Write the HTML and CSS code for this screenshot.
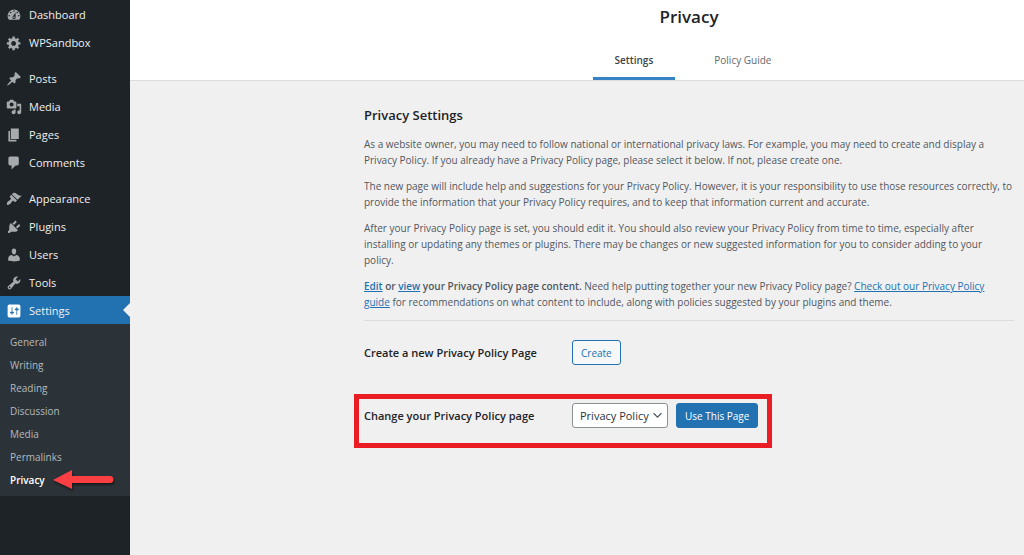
FILE: index.html
```html
<!DOCTYPE html>
<html lang="en">
  <head>
    <meta charset="utf-8">
    <title>Privacy</title>
    <meta name="viewport" content="width=device-width, initial-scale=1">
    <link rel="stylesheet" href="styles.css">
  </head>
  <body>
    <nav class="sidebar">
      <ul class="menu">
        <li><a href="#"><svg viewBox="0 0 20 20"><path d="M3.76 16h12.48c1.09-1.27 1.76-2.92 1.76-4.73C18 7.21 14.42 3 10 3s-8 4.21-8 8.27c0 1.81.67 3.46 1.76 4.73zM10 4c.55 0 1 .45 1 1s-.45 1-1 1-1-.45-1-1 .45-1 1-1zM6 6c.55 0 1 .45 1 1s-.45 1-1 1-1-.45-1-1 .45-1 1-1zm8 0c.55 0 1 .45 1 1s-.45 1-1 1-1-.45-1-1 .45-1 1-1zm-5.37 5.55L12 7v6c0 1.1-.9 2-2 2s-2-.9-2-2c0-.57.24-1.08.63-1.45zM4 10c.55 0 1 .45 1 1s-.45 1-1 1-1-.45-1-1 .45-1 1-1zm12 0c.55 0 1 .45 1 1s-.45 1-1 1-1-.45-1-1 .45-1 1-1zm-5 3c0-.55-.45-1-1-1s-1 .45-1 1 .45 1 1 1 1-.45 1-1z"/></svg>Dashboard</a></li>
        <li><a href="#"><svg viewBox="0 0 20 20"><path d="M18 12h-2.18c-.17.7-.44 1.35-.81 1.93l1.54 1.54-2.1 2.1-1.54-1.54c-.58.36-1.23.63-1.91.79V19H8v-2.18c-.68-.16-1.33-.43-1.91-.79l-1.54 1.54-2.12-2.12 1.54-1.54c-.36-.58-.63-1.23-.79-1.91H1V9.03h2.17c.16-.7.44-1.35.8-1.94L2.43 5.55l2.1-2.1 1.54 1.54c.58-.37 1.24-.64 1.93-.81V2h3v2.18c.68.16 1.33.43 1.91.79l1.54-1.54 2.12 2.12-1.54 1.54c.36.59.64 1.24.8 1.94H18V12zm-8.5 1.5c1.66 0 3-1.34 3-3s-1.34-3-3-3-3 1.34-3 3 1.34 3 3 3z"/></svg>WPSandbox</a></li>
        <li class="separator"></li>
        <li><a href="#"><svg viewBox="0 0 20 20"><path d="M10.44 3.02l1.82-1.82 6.36 6.35-1.83 1.82c-1.05-.68-2.48-.57-3.41.36l-.75.75c-.92.93-1.04 2.35-.35 3.41l-1.83 1.82-2.41-2.41-2.8 2.79c-.42.42-3.38 2.71-3.8 2.29s1.86-3.39 2.28-3.81l2.79-2.79L4.1 9.36l1.83-1.82c1.05.69 2.48.57 3.4-.36l.75-.75c.93-.92 1.05-2.35.36-3.41z"/></svg>Posts</a></li>
        <li><a href="#"><svg viewBox="0 0 20 20"><path d="M13 11V4c0-.55-.45-1-1-1h-1.67L9 1H5L3.67 3H2c-.55 0-1 .45-1 1v7c0 .55.45 1 1 1h10c.55 0 1-.45 1-1zM7 4.5c1.38 0 2.5 1.12 2.5 2.5S8.38 9.5 7 9.5 4.5 8.38 4.5 7 5.62 4.5 7 4.5zM14 6h5v10.5c0 1.38-1.12 2.5-2.5 2.5S14 17.88 14 16.5s1.12-2.5 2.5-2.5c.17 0 .34.02.5.05V9h-3V6zm-4 8.05V13h2v3.5c0 1.38-1.12 2.5-2.5 2.5S7 17.88 7 16.5 8.12 14 9.5 14c.17 0 .34.02.5.05z"/></svg>Media</a></li>
        <li><a href="#"><svg viewBox="0 0 20 20"><path d="M6 15V2h10v13H6zm-1 1h8v2H3V5h2v11z"/></svg>Pages</a></li>
        <li><a href="#"><svg viewBox="0 0 20 20"><path d="M5 2h9c1.1 0 2 .9 2 2v7c0 1.1-.9 2-2 2h-2l-5 5v-5H5c-1.1 0-2-.9-2-2V4c0-1.1.9-2 2-2z"/></svg>Comments</a></li>
        <li class="separator"></li>
        <li><a href="#"><svg viewBox="0 0 20 20"><path d="M14.48 11.06L7.41 3.99l1.5-1.5c.5-.56 2.3-.47 3.51.32 1.21.8 1.43 1.28 2.91 2.1 1.18.64 2.45 1.26 4.45.85zm-.71.71L6.7 4.7 4.93 6.47c-.39.39-.39 1.02 0 1.41l1.06 1.06c.39.39.39 1.03 0 1.42-.6.6-1.43 1.11-2.21 1.69-.35.26-.7.53-1.01.84C1.43 14.23.4 16.08 1.4 17.07c.99 1 2.84-.03 4.18-1.36.31-.31.58-.66.85-1.02.57-.78 1.08-1.61 1.69-2.21.39-.39 1.02-.39 1.41 0l1.06 1.06c.39.39 1.02.39 1.41 0z"/></svg>Appearance</a></li>
        <li><a href="#"><svg viewBox="0 0 20 20"><path d="M13.11 4.36L9.87 7.6 8 5.73l3.24-3.24c.35-.34 1.05-.2 1.56.32.52.51.66 1.21.31 1.55zm-8 1.77l.91-1.12 9.01 9.01-1.19.84c-.71.71-2.63 1.16-3.82 1.16H6.14L4.9 17.26c-.59.59-1.54.59-2.12 0-.59-.58-.59-1.53 0-2.12l1.24-1.24v-3.88c0-1.13.4-3.19 1.09-3.89zm7.26 3.97l3.24-3.24c.34-.35 1.04-.21 1.55.31.52.51.66 1.21.31 1.55l-3.24 3.25z"/></svg>Plugins</a></li>
        <li><a href="#"><svg viewBox="0 0 20 20"><path d="M10 9.25c-2.27 0-2.73-3.44-2.73-3.44C7 4.02 7.82 2 9.97 2c2.16 0 2.98 2.02 2.71 3.81 0 0-.41 3.44-2.68 3.44zm0 2.57L12.72 10c2.39 0 4.52 2.33 4.52 4.53v2.49s-3.65 1.13-7.24 1.13c-3.65 0-7.24-1.13-7.24-1.13v-2.49c0-2.25 1.94-4.48 4.47-4.48z"/></svg>Users</a></li>
        <li><a href="#"><svg viewBox="0 0 20 20"><path d="M16.68 9.77c-1.34 1.34-3.3 1.67-4.95.99l-5.41 6.52c-.99.99-2.59.99-3.58 0s-.99-2.59 0-3.57l6.52-5.42c-.68-1.65-.35-3.61.99-4.95 1.28-1.28 3.12-1.62 4.72-1.06l-2.89 2.89 2.82 2.82 2.86-2.87c.53 1.58.18 3.39-1.08 4.65zM3.81 16.21c.4.39 1.04.39 1.43 0 .4-.4.4-1.04 0-1.43-.39-.4-1.03-.4-1.43 0-.39.39-.39 1.03 0 1.43z"/></svg>Tools</a></li>
        <li class="current"><a href="#"><svg viewBox="0 0 20 20"><path d="M18 16V4c0-1.1-.9-2-2-2H4c-1.1 0-2 .9-2 2v12c0 1.1.9 2 2 2h12c1.1 0 2-.9 2-2zM8 11h1c.55 0 1 .45 1 1s-.45 1-1 1H8v1.5c0 .28-.22.5-.5.5s-.5-.22-.5-.5V13H6c-.55 0-1-.45-1-1s.45-1 1-1h1V5.5c0-.28.22-.5.5-.5s.5.22.5.5V11zm5-2h-1c-.55 0-1-.45-1-1s.45-1 1-1h1V5.5c0-.28.22-.5.5-.5s.5.22.5.5V7h1c.55 0 1 .45 1 1s-.45 1-1 1h-1v5.5c0 .28-.22.5-.5.5s-.5-.22-.5-.5V9z"/></svg>Settings</a></li>
      </ul>
      <ul class="submenu">
        <li><a href="#">General</a></li>
        <li><a href="#">Writing</a></li>
        <li><a href="#">Reading</a></li>
        <li><a href="#">Discussion</a></li>
        <li><a href="#">Media</a></li>
        <li><a href="#">Permalinks</a></li>
        <li class="active">
          <a href="#">Privacy</a>
          <svg class="arrow" viewBox="0 0 64 24"><path d="M1 11L20 1v6h38a3 3 0 0 1 0 7H20v6z"/></svg>
        </li>
      </ul>
    </nav>

    <div class="page">
      <header class="header">
        <h1>Privacy</h1>
        <nav class="tabs">
          <a href="#" class="tab active">Settings</a>
          <a href="#" class="tab">Policy Guide</a>
        </nav>
      </header>

      <main class="content">
        <h2>Privacy Settings</h2>
        <p>As a website owner, you may need to follow national or international privacy laws. For example, you may need to create and display a Privacy Policy. If you already have a Privacy Policy page, please select it below. If not, please create one.</p>
        <p>The new page will include help and suggestions for your Privacy Policy. However, it is your responsibility to use those resources correctly, to provide the information that your Privacy Policy requires, and to keep that information current and accurate.</p>
        <p>After your Privacy Policy page is set, you should edit it. You should also review your Privacy Policy from time to time, especially after installing or updating any themes or plugins. There may be changes or new suggested information for you to consider adding to your policy.</p>
        <p><strong><a href="#">Edit</a> or <a href="#">view</a> your Privacy Policy page content.</strong> Need help putting together your new Privacy Policy page? <a href="#">Check out our Privacy Policy<br>guide</a> for recommendations on what content to include, along with policies suggested by your plugins and theme.</p>
        <hr>
        <form class="row">
          <label for="create-page">Create a new Privacy Policy Page</label>
          <button type="button" id="create-page" class="button">Create</button>
        </form>
        <form class="row highlight">
          <label for="page-select">Change your Privacy Policy page</label>
          <div class="select">
            <select id="page-select">
              <option>Privacy Policy</option>
            </select>
            <svg viewBox="0 0 20 20"><path d="M5 6l5 5 5-5 2 1-7 7-7-7 2-1z"/></svg>
          </div>
          <button type="button" class="button primary">Use This Page</button>
        </form>
      </main>
    </div>
  </body>
</html>
```
FILE: styles.css
```css
* {
    box-sizing: border-box;
}

body {
    margin: 0;
    display: flex;
    min-height: 100vh;
    font-family: "Open Sans", sans-serif;
    font-size: 10px;
    line-height: 16px;
    color: #50575e;
    background: #f0f0f1;
}

a {
    color: #2271b1;
}

ul {
    list-style: none;
    margin: 0;
    padding: 0;
}

/* Sidebar */
.sidebar {
    flex: none;
    width: 130px;
    background: #1d2327;
}

.menu a {
    display: flex;
    align-items: center;
    gap: 7px;
    height: 28px;
    padding: 1px 0 0 6px;
    font-size: 11px;
    color: #f0f0f1;
    text-decoration: none;
}

.menu svg {
    width: 16px;
    height: 16px;
    fill: #a7aaad;
}

.separator {
    height: 8px;
}

.current {
    position: relative;
    background: #2271b1;
}

.menu .current svg {
    fill: #fff;
}

.current::after {
    content: "";
    position: absolute;
    right: 0;
    top: 7px;
    border: 7px solid transparent;
    border-left: 0;
    border-right-color: #f0f0f1;
}

.submenu {
    padding: 7px 0 4px;
    background: #2c3338;
}

.submenu li {
    position: relative;
    padding-left: 10px;
}

.submenu a {
    display: block;
    line-height: 23px;
    color: #b4b9be;
    text-decoration: none;
}

.submenu .active a {
    font-weight: 600;
    color: #fff;
}

.arrow {
    position: absolute;
    left: 52px;
    top: 0;
    width: 64px;
    height: 24px;
    fill: #fb3f42;
    filter: drop-shadow(1px 2px 1px rgba(0, 0, 0, 0.5));
}

/* Page */
.page {
    flex: 1;
    min-width: 0;
}

.header {
    padding-left: 224px;
    background: #fff;
    border-bottom: 1px solid #dcdcde;
    text-align: center;
}

h1 {
    margin: 0;
    padding-top: 5px;
    font-size: 17px;
    line-height: 24px;
    font-weight: 600;
    color: #1d2327;
}

.tabs {
    display: flex;
    justify-content: center;
    gap: 17px;
    margin-top: 13px;
    padding-left: 8px;
}

.tab {
    padding: 10px 22px 9px;
    border-bottom: 3px solid transparent;
    color: #646970;
    text-decoration: none;
}

.tab.active {
    border-color: #3582c4;
    font-weight: 600;
    color: #3c434a;
}

.content {
    max-width: 650px;
    margin-left: 234px;
    margin-right: 10px;
    padding-top: 24px;
}

h2 {
    margin: 0 0 11px;
    font-size: 13px;
    line-height: 20px;
    font-weight: 600;
    color: #1d2327;
}

p {
    margin: 0 0 10px;
}

strong {
    font-weight: 600;
}

hr {
    margin: 0 0 19px;
    border: 0;
    border-top: 1px solid #dcdcde;
}

/* Form rows */
.row {
    display: flex;
    align-items: center;
}

.row label {
    width: 208px;
    font-size: 11px;
    font-weight: 600;
    color: #1d2327;
}

.button {
    height: 25px;
    padding: 0 8px;
    border: 1px solid #2271b1;
    border-radius: 3px;
    background: #f6f7f7;
    font-family: inherit;
    font-size: 10px;
    color: #2271b1;
}

.button.primary {
    margin-left: 8px;
    background: #2271b1;
    color: #fff;
}

.select {
    position: relative;
}

.select select {
    appearance: none;
    display: block;
    width: 96px;
    height: 25px;
    padding: 0 16px 0 7px;
    border: 1px solid #8c8f94;
    border-radius: 3px;
    background: #fff;
    font-family: inherit;
    font-size: 11px;
    color: #2c3338;
}

.select svg {
    position: absolute;
    right: 4px;
    top: 6px;
    width: 13px;
    height: 13px;
    fill: #50575e;
    pointer-events: none;
}

.highlight {
    width: fit-content;
    margin: 29px 0 0 -10px;
    padding: 4px 9px 15px 5px;
    border: 5px solid #ea1c24;
}
```
